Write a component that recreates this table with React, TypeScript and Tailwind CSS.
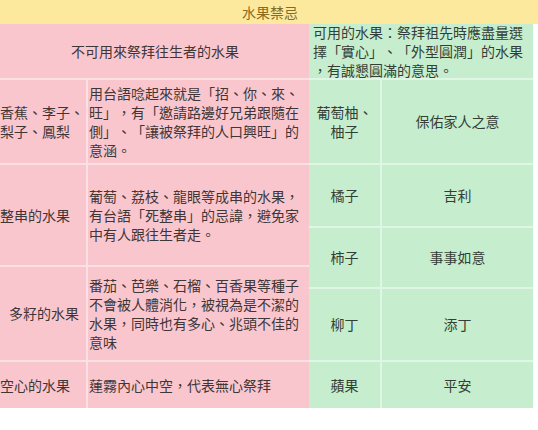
import React from "react";

const font = { fontFamily: '"Noto Sans CJK TC", "Noto Sans", sans-serif' };

function Lines({ lines }: { lines: string[] }) {
  return (
    <div>
      {lines.map((l, i) => (
        <div key={i} className="whitespace-nowrap">
          {l}
        </div>
      ))}
    </div>
  );
}

export default function App() {
  const pink = "bg-[#fac6ce] text-[#403636]";
  const green = "bg-[#c6eece] text-[#353e36]";
  const bb = "border-b-2 border-white/45";
  const br = "border-r-2 border-white/45";
  return (
    <div
      className="w-[538px] h-[430px] bg-white overflow-hidden text-[14px] leading-[19px] [text-spacing-trim:space-all]"
      style={font}
    >
      <div className="h-[24px] bg-[#fde99e] flex items-center justify-center text-[#8a6a1e] pl-[2px]">
        水果禁忌
      </div>
      <div className="grid w-[533px] grid-cols-[88px_221px_73px_151px] grid-rows-[56px_85px_63px_39px_22px_73px_46px]">
        {/* header row */}
        <div className={`${pink} ${bb} col-start-1 col-span-2 row-start-1 flex items-center justify-center text-[#7e3a42] pl-[1px]`}>
          不可用來祭拜往生者的水果
        </div>
        <div className={`${green} ${bb} col-start-3 col-span-2 row-start-1 flex items-center pl-[4px] text-[#3a7f45]`}>
          <Lines lines={["可用的水果：祭拜祖先時應盡量選", "擇「實心」、「外型圓潤」的水果", "，有誠懇圓滿的意思。"]} />
        </div>

        {/* row 1 */}
        <div className={`${pink} ${bb} ${br} col-start-1 row-start-2 flex items-center`}>
          <Lines lines={["香蕉、李子、", "梨子、鳳梨"]} />
        </div>
        <div className={`${pink} ${bb} col-start-2 row-start-2 flex items-center pl-[1px]`}>
          <Lines
            lines={[
              "用台語唸起來就是「招、你、來、",
              "旺」，有「邀請路邊好兄弟跟隨在",
              "側」、「讓被祭拜的人口興旺」的",
              "意涵。",
            ]}
          />
        </div>
        <div className={`${green} ${bb} ${br} col-start-3 row-start-2 flex items-center justify-center text-center px-[4px]`}>
          <Lines lines={["葡萄柚、", "柚子"]} />
        </div>
        <div className={`${green} ${bb} col-start-4 row-start-2 flex items-center justify-center`}>
          保佑家人之意
        </div>

        {/* pink row 2 */}
        <div className={`${pink} ${bb} ${br} col-start-1 row-start-3 row-span-2 flex items-center`}>
          整串的水果
        </div>
        <div className={`${pink} ${bb} col-start-2 row-start-3 row-span-2 flex items-center pl-[1px]`}>
          <Lines lines={["葡萄、荔枝、龍眼等成串的水果，", "有台語「死整串」的忌諱，避免家", "中有人跟往生者走。"]} />
        </div>

        {/* green 橘子 */}
        <div className={`${green} ${bb} ${br} col-start-3 row-start-3 flex items-center justify-center`}>橘子</div>
        <div className={`${green} ${bb} col-start-4 row-start-3 flex items-center justify-center`}>吉利</div>

        {/* green 柿子 */}
        <div className={`${green} ${bb} ${br} col-start-3 row-start-4 row-span-2 flex items-center justify-center`}>柿子</div>
        <div className={`${green} ${bb} col-start-4 row-start-4 row-span-2 flex items-center justify-center`}>事事如意</div>

        {/* pink row 3 */}
        <div className={`${pink} ${bb} ${br} col-start-1 row-start-5 row-span-2 flex items-center justify-center pl-[2px]`}>
          多籽的水果
        </div>
        <div className={`${pink} ${bb} col-start-2 row-start-5 row-span-2 flex items-center pl-[1px]`}>
          <Lines
            lines={[
              "番茄、芭樂、石榴、百香果等種子",
              "不會被人體消化，被視為是不潔的",
              "水果，同時也有多心、兆頭不佳的",
              "意味",
            ]}
          />
        </div>

        {/* green 柳丁 */}
        <div className={`${green} ${bb} ${br} col-start-3 row-start-6 flex items-center justify-center`}>柳丁</div>
        <div className={`${green} ${bb} col-start-4 row-start-6 flex items-center justify-center`}>添丁</div>

        {/* row 4 */}
        <div className={`${pink} ${br} col-start-1 row-start-7 flex items-center`}>空心的水果</div>
        <div className={`${pink} col-start-2 row-start-7 flex items-center pl-[1px]`}>蓮霧內心中空，代表無心祭拜</div>
        <div className={`${green} ${br} col-start-3 row-start-7 flex items-center justify-center`}>蘋果</div>
        <div className={`${green} col-start-4 row-start-7 flex items-center justify-center`}>平安</div>
      </div>
    </div>
  );
}
